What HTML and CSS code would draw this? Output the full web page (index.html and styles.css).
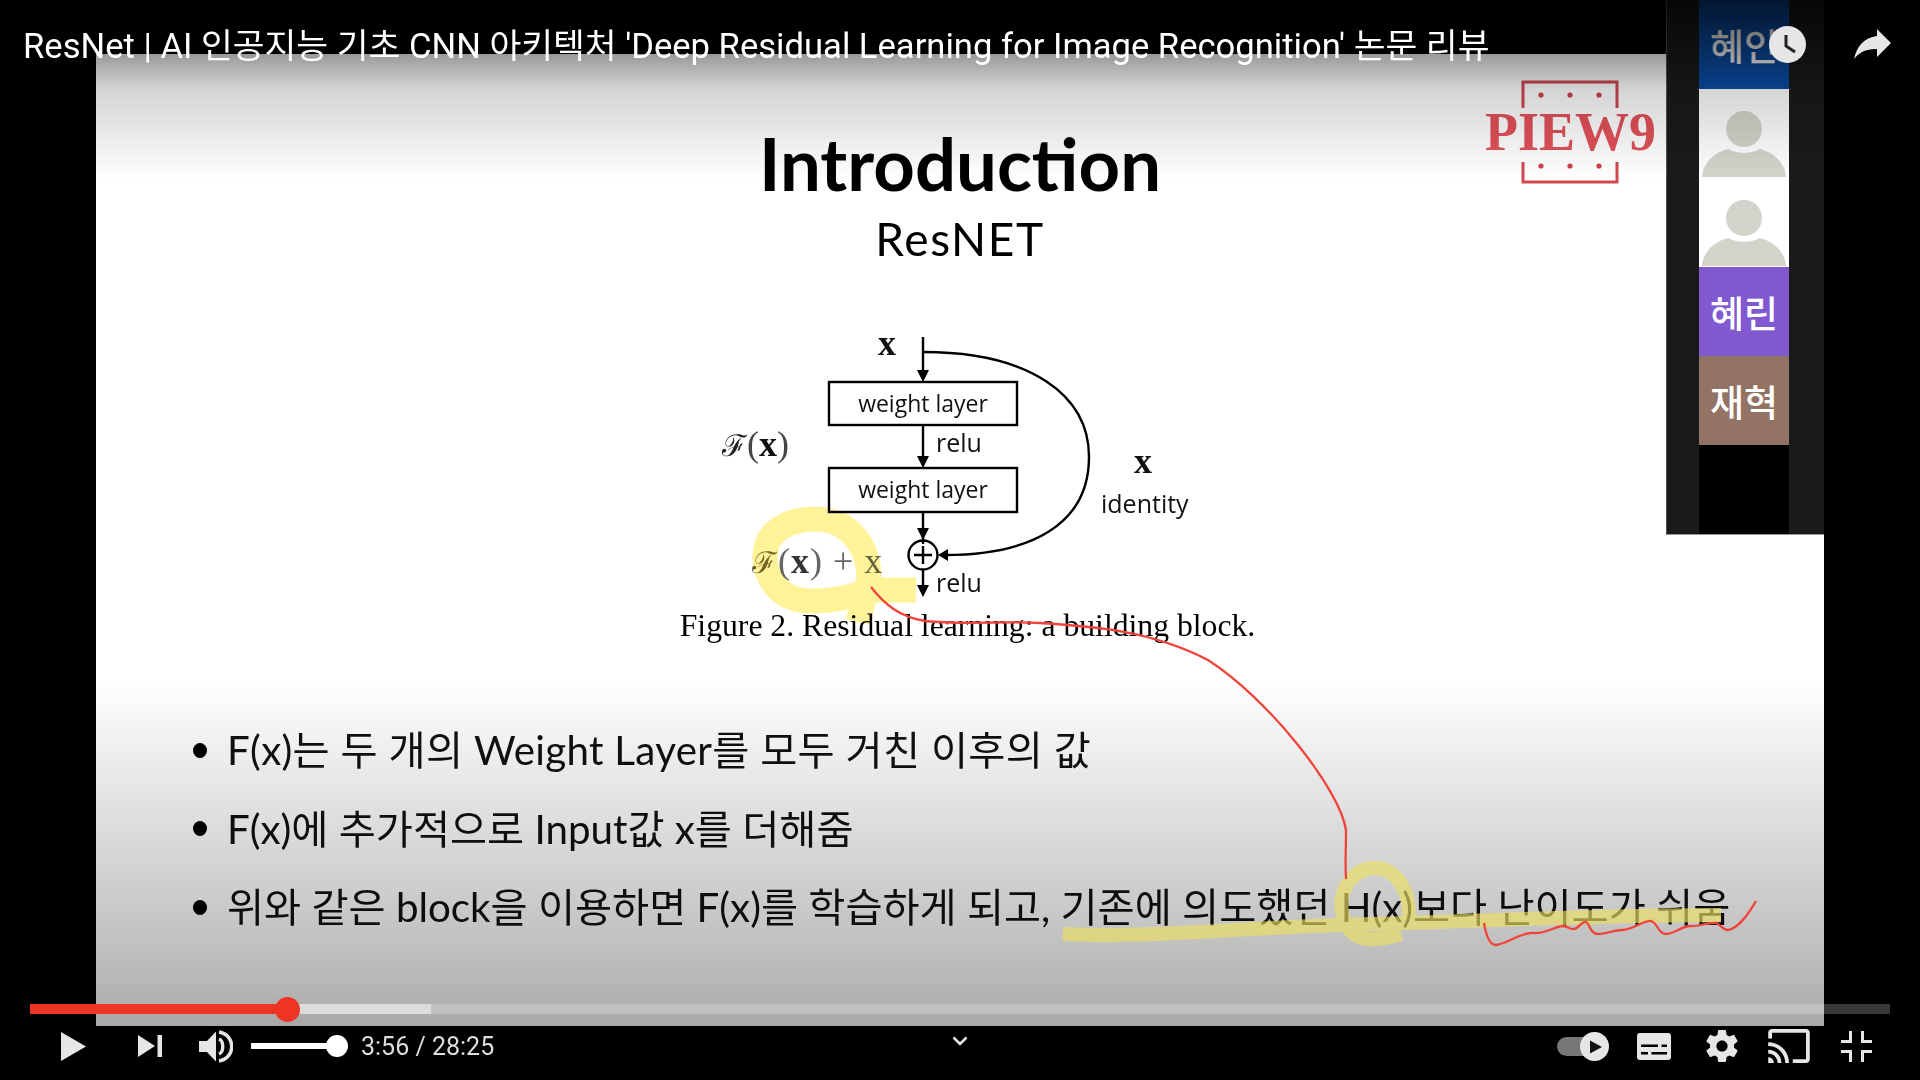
FILE: index.html
```html
<!DOCTYPE html>
<html lang="ko">

<head>
    <meta charset="utf-8">
    <title>ResNet 논문 리뷰</title>
    <link rel="stylesheet" href="styles.css">
</head>

<body>
    <div class="player">
        <div class="slide">
            <div class="heading">
                <h1>Introduction</h1>
                <h2>ResNET</h2>
            </div>

            <svg class="diagram" viewBox="680 315 560 292">
                <g class="wire">
                    <path d="M923 337V372M923 425V458M923 512V544M923 570V587" />
                    <path d="M923 352C1030 352 1089 395 1089 457C1089 525 1030 555 945 555" />
                    <rect x="829" y="382" width="188" height="43" />
                    <rect x="829" y="468" width="188" height="44" />
                    <circle cx="923" cy="555" r="14.5" />
                    <path d="M914 555H932M923 546V564" />
                </g>
                <path class="tip" d="M917 370H929L923 382ZM917 456H929L923 468ZM917 528H929L923 540ZM917 585H929L923 597ZM948 549V561L938 555Z" />
                <text class="math" x="878" y="355">x</text>
                <text class="box-label" x="923" y="412" text-anchor="middle">weight layer</text>
                <text class="box-label" x="923" y="498" text-anchor="middle">weight layer</text>
                <text class="side-label" x="936" y="452">relu</text>
                <text class="side-label" x="936" y="592">relu</text>
                <text class="side-label" x="1101" y="513">identity</text>
                <text class="math" x="1134" y="473">x</text>
                <text class="math" x="722" y="456"><tspan class="script">ℱ</tspan><tspan class="thin">(</tspan>x<tspan class="thin">)</tspan></text>
                <text class="math math-faded" x="752" y="573"><tspan class="script">ℱ</tspan><tspan class="thin">(</tspan>x<tspan class="thin">) + x</tspan></text>
            </svg>
            <p class="caption">Figure 2. Residual learning: a building block.</p>

            <ul class="points">
                <li class="points-wide">F(x)는 두 개의 Weight Layer를 모두 거친 이후의 값</li>
                <li>F(x)에 추가적으로 Input값 x를 더해줌</li>
                <li>위와 같은 block을 이용하면 F(x)를 학습하게 되고, 기존에 의도했던 H(x)보다 난이도가 쉬움</li>
            </ul>

            <svg class="logo" viewBox="0 0 172 106">
                <path class="logo-frame" d="M38 28V2H132V28M38 82V102H132V82" />
                <g class="logo-dots">
                    <circle cx="56" cy="15" r="2.6" /><circle cx="85" cy="15" r="2.6" /><circle cx="114" cy="15" r="2.6" />
                    <circle cx="56" cy="86" r="2.6" /><circle cx="85" cy="86" r="2.6" /><circle cx="114" cy="86" r="2.6" />
                </g>
                <text class="logo-text" x="0" y="70">PIEW9</text>
            </svg>

            <svg class="ink" viewBox="96 54 1728 972">
                <path class="marker" d="M812 601C770 601 764 565 765 555C766 530 790 519 815 519C848 519 869 545 869 578L858 622M869 590H916M812 601C835 601 860 595 869 590" />
            </svg>
        </div>

        <div class="cams">
            <div class="cam-strip">
                <div class="cam cam-blue">혜인</div>
                <div class="cam">
                    <svg class="avatar" viewBox="0 0 90 89"><circle cx="45" cy="40" r="18" /><path d="M3 88C4 72 18 62 30 60C36 65 54 65 60 60C72 62 86 72 87 88Z" /></svg>
                </div>
                <div class="cam">
                    <svg class="avatar" viewBox="0 0 90 89"><circle cx="45" cy="40" r="18" /><path d="M3 88C4 72 18 62 30 60C36 65 54 65 60 60C72 62 86 72 87 88Z" /></svg>
                </div>
                <div class="cam cam-purple">혜린</div>
                <div class="cam cam-brown">재혁</div>
            </div>
        </div>

        <div class="shade"></div>

        <!-- the lower strokes keep their colour under the player shade, so they sit above it -->
        <svg class="ink-top" viewBox="0 0 1920 1080">
            <path class="marker-low" d="M1063 934C1150 938 1240 928 1340 925C1450 922 1600 915 1721 915M1401 934C1375 942 1348 945 1342 912C1338 888 1355 868 1375 868C1396 868 1410 890 1409 918" />
            <path class="pen" d="M871 587C885 605 900 617 925 621C960 625 1000 621 1040 623C1090 626 1150 630 1208 660C1270 700 1340 790 1346 830C1346 850 1345 860 1346 879" />
            <path class="pen" d="M1484 923C1486 935 1490 945 1496 945C1508 944 1520 932 1534 933C1545 934 1553 927 1563 926C1568 926 1570 930 1574 929C1579 928 1582 921 1586 922C1590 924 1590 934 1598 934C1606 934 1614 930 1622 930C1633 930 1644 920 1651 921C1658 923 1658 934 1666 934C1674 934 1682 926 1690 926C1698 927 1708 922 1716 923C1721 925 1723 930 1728 930C1737 929 1748 915 1756 901" />
        </svg>

        <div class="top-bar">
            <span class="video-title">ResNet | AI 인공지능 기초 CNN 아키텍처 'Deep Residual Learning for Image Recognition' 논문 리뷰</span>
            <svg class="clock" viewBox="0 0 37 37">
                <circle cx="18.5" cy="18.5" r="18.5" />
                <path d="M17 9V20L26 26" />
            </svg>
            <svg class="share" viewBox="0 0 38 30">
                <path d="M23 0L37 14L23 28V20C13 19.5 5.5 23 0 30C2.5 18 10 8.5 23 7Z" />
            </svg>
        </div>

        <div class="controls">
            <div class="seek">
                <div class="seek-buffer" style="width: 21.56%"></div>
                <div class="seek-played" style="width: 13.87%"><span class="seek-knob"></span></div>
            </div>

            <div class="row">
                <div class="group">
                    <svg class="icon play" viewBox="0 0 25 29"><path d="M0 0L25 14.5L0 29Z" /></svg>
                    <svg class="icon next" viewBox="0 0 24 22"><path d="M0 0L17 11L0 22ZM19.5 0H24V22H19.5Z" /></svg>
                    <svg class="icon volume" viewBox="0 0 34 33">
                        <path d="M0 11H8L17 1.5V31.5L8 22H0Z" />
                        <path class="wave" d="M20 9C25 11 25 22 20 24M20 2C37 5 37 28 20 31" />
                    </svg>
                    <div class="volume-bar"><span class="volume-knob"></span></div>
                    <span class="time">3:56 / 28:25</span>
                </div>

                <svg class="chevron" viewBox="0 0 16 10"><path d="M1.5 1.5L8 8L14.5 1.5" /></svg>

                <div class="group">
                    <svg class="icon toggle" viewBox="0 0 52 29">
                        <rect class="toggle-track" x="0" y="5" width="38" height="19" rx="9.5" />
                        <circle cx="37.5" cy="14.5" r="14.5" />
                        <path class="toggle-play" d="M33 8.5L45 15L33 21.5Z" />
                    </svg>
                    <svg class="icon subs" viewBox="0 0 34 27">
                        <rect width="34" height="27" rx="3" />
                        <path class="subs-line" d="M4 11.5H21V14H4ZM24.5 11.5H30V14H24.5ZM4 19H11V21.5H4ZM14.5 19H30V21.5H14.5Z" />
                    </svg>
                    <svg class="icon gear" viewBox="2 2 20 20">
                        <path d="M19.43 12.98c.04-.32.07-.64.07-.98s-.03-.66-.07-.98l2.11-1.65c.19-.15.24-.42.12-.64l-2-3.46c-.12-.22-.39-.3-.61-.22l-2.49 1c-.52-.4-1.08-.73-1.69-.98l-.38-2.65C14.46 2.18 14.25 2 14 2h-4c-.25 0-.46.18-.49.42l-.38 2.65c-.61.25-1.17.59-1.69.98l-2.49-1c-.23-.09-.49 0-.61.22l-2 3.46c-.13.22-.07.49.12.64l2.11 1.65c-.04.32-.07.65-.07.98s.03.66.07.98l-2.11 1.65c-.19.15-.24.42-.12.64l2 3.46c.12.22.39.3.61.22l2.49-1c.52.4 1.08.73 1.69.98l.38 2.65c.03.24.24.42.49.42h4c.25 0 .46-.18.49-.42l.38-2.65c.61-.25 1.17-.59 1.69-.98l2.49 1c.23.09.49 0 .61-.22l2-3.46c.12-.22.07-.49-.12-.64l-2.11-1.65zM12 15.5c-1.93 0-3.5-1.57-3.5-3.5s1.57-3.5 3.5-3.5 3.5 1.57 3.5 3.5-1.57 3.5-3.5 3.5z" />
                    </svg>
                    <svg class="icon cast" viewBox="1 3 22 18">
                        <path d="M21 3H3c-1.1 0-2 .9-2 2v3h2V5h18v14h-7v2h7c1.1 0 2-.9 2-2V5c0-1.1-.9-2-2-2zM1 18v3h3c0-1.66-1.34-3-3-3zm0-4v2c2.76 0 5 2.24 5 5h2c0-3.87-3.13-7-7-7zm0-4v2c4.97 0 9 4.03 9 9h2c0-6.08-4.93-11-11-11z" />
                    </svg>
                    <svg class="icon shrink" viewBox="0 0 31 31">
                        <path d="M0 9H8V0H11V12H0ZM20 0H23V9H31V12H20ZM0 19H11V31H8V22H0ZM20 19H31V22H23V31H20Z" />
                    </svg>
                </div>
            </div>
        </div>
    </div>
</body>

</html>
```

FILE: styles.css
```css
* {
    box-sizing: border-box;
}

body {
    margin: 0;
    background: #000;
    font-family: "Noto Sans CJK KR", sans-serif;
}

.player {
    position: relative;
    width: 1920px;
    height: 1080px;
    padding: 54px 96px 0;
    overflow: hidden;
    background: #000;
}

.slide {
    position: relative;
    width: 1728px;
    height: 972px;
    background: #fff;
    color: #000;
}

.heading {
    padding-top: 69px;
    text-align: center;
    font-family: Lato, sans-serif;
}

.heading h1 {
    margin: 0;
    font-size: 72.5px;
    font-weight: 700;
    line-height: 80px;
}

.heading h2 {
    margin: 8px 0 0;
    font-size: 46px;
    font-weight: 400;
    line-height: 56px;
    letter-spacing: 1.6px;
}

.diagram {
    display: block;
    width: 560px;
    height: 292px;
    margin: 48px auto 0;
}

.wire {
    fill: none;
    stroke: #000;
    stroke-width: 2.4;
}

.tip {
    fill: #000;
}

.box-label {
    font-family: "Open Sans", sans-serif;
    font-size: 23px;
    fill: #111;
}

.side-label {
    font-family: "Open Sans", sans-serif;
    font-size: 25px;
    fill: #111;
}

.math {
    font-family: "Liberation Serif", serif;
    font-size: 36px;
    font-weight: 700;
    fill: #111;
}

.math-faded {
    letter-spacing: 1px;
    fill: #333;
}

.script {
    font-family: "DejaVu Serif", serif;
    font-size: 30px;
    font-weight: 400;
    fill: #222;
}

.math-faded .script {
    fill: #6f6a3c;
}

.thin {
    font-weight: 400;
    fill: #444;
}

.math-faded .thin {
    fill: #666;
}

.caption {
    margin: 1px 0 0;
    padding-left: 15px;
    text-align: center;
    font-family: "Liberation Serif", serif;
    font-size: 31.7px;
    line-height: 36px;
}

.points {
    display: flex;
    flex-direction: column;
    margin: 0;
    padding: 67px 0 0 97px;
    list-style: none;
    font-family: Lato, "Noto Sans CJK KR", sans-serif;
    font-size: 40.3px;
    font-weight: 400;
    line-height: 78.5px;
    color: #111;
}

.points li {
    display: flex;
    align-items: center;
    gap: 20px;
    white-space: nowrap;
}

.points .points-wide {
    letter-spacing: 0.3px;
}

.points li::before {
    content: "";
    width: 14px;
    height: 15px;
    border-radius: 50%;
    background: #000;
}

.logo {
    position: absolute;
    top: 26px;
    left: 1389px;
    width: 172px;
    height: 106px;
}

.logo-frame {
    fill: none;
    stroke: #d1484f;
    stroke-width: 3;
}

.logo-dots {
    fill: #c9444b;
}

.logo-text {
    font-family: "Liberation Serif", serif;
    font-size: 54px;
    font-weight: 700;
    fill: #e3525a;
}

.ink {
    position: absolute;
    top: 0;
    left: 0;
    width: 1728px;
    height: 972px;
}

.marker {
    fill: none;
    stroke: #fff39a;
    stroke-width: 25;
    stroke-linejoin: round;
    mix-blend-mode: multiply;
}

.ink-top {
    position: absolute;
    top: 0;
    left: 0;
    width: 1920px;
    height: 1080px;
}

.marker-low {
    fill: none;
    stroke: #ecdf61;
    stroke-opacity: 0.65;
    stroke-width: 14;
    stroke-linejoin: round;
}

.pen {
    fill: none;
    stroke: #f0443a;
    stroke-width: 2.3;
}

/* webcam column on the right of the slide */
.cams {
    position: absolute;
    top: 0;
    left: 1666px;
    display: flex;
    justify-content: center;
    width: 158px;
    height: 535px;
    padding-right: 3px;
    background: #1a1a1a;
    border-left: 1px solid #555;
    border-bottom: 1px solid #999;
}

.cam-strip {
    width: 90px;
    background: #000;
}

.cam {
    display: flex;
    align-items: center;
    justify-content: center;
    height: 89px;
    background: #fff;
    color: #fff;
    font-size: 37px;
    font-weight: 500;
}

.cam-blue {
    background: #0a4da6;
}

.cam-purple {
    background: #8059d1;
}

.cam-brown {
    background: #937464;
}

.avatar {
    width: 90px;
    height: 89px;
    fill: #d4d4cc;
}

.shade {
    position: absolute;
    top: 0;
    left: 0;
    width: 1920px;
    height: 1080px;
    background:
        linear-gradient(rgba(0, 0, 0, 0.72) 0, rgba(0, 0, 0, 0.4) 54px, rgba(0, 0, 0, 0.17) 89px, transparent 180px),
        linear-gradient(transparent 680px, rgba(0, 0, 0, 0.15) 840px, rgba(0, 0, 0, 0.28) 980px, rgba(0, 0, 0, 0.34) 1026px);
}

.top-bar {
    position: absolute;
    top: 0;
    left: 0;
    display: flex;
    align-items: center;
    width: 1920px;
    height: 88px;
    padding: 0 28px 0 23px;
}

.video-title {
    flex: 1;
    margin-top: -3px;
    font-family: Roboto, "Noto Sans CJK KR", sans-serif;
    font-size: 34.6px;
    color: #fff;
    white-space: nowrap;
}

.clock {
    width: 37px;
    height: 37px;
    margin-right: 48px;
    fill: #e6e6e6;
}

.clock path {
    fill: none;
    stroke: #222;
    stroke-width: 3;
}

.share {
    width: 38px;
    height: 30px;
    fill: #e6e6e6;
}

.controls {
    position: absolute;
    left: 0;
    bottom: 0;
    width: 1920px;
    height: 54px;
}

.seek {
    position: absolute;
    top: -22px;
    left: 30px;
    width: 1860px;
    height: 10px;
    background: rgba(255, 255, 255, 0.22);
}

.seek-buffer {
    position: absolute;
    top: 0;
    left: 0;
    height: 10px;
    background: #dcdcdc;
}

.seek-played {
    position: absolute;
    top: 0;
    left: 0;
    height: 10px;
    background: #ee3424;
}

.seek-knob {
    position: absolute;
    top: -7.5px;
    right: -12.5px;
    width: 25px;
    height: 25px;
    border-radius: 50%;
    background: #ee3424;
}

.row {
    position: relative;
    display: flex;
    align-items: center;
    justify-content: space-between;
    height: 40px;
    padding: 0 48px 0 61px;
}

.group {
    display: flex;
    align-items: center;
}

.icon {
    flex: none;
    fill: #e6e6e6;
}

.play {
    width: 25px;
    height: 29px;
}

.next {
    width: 24px;
    height: 22px;
    margin-left: 52px;
}

.volume {
    width: 34px;
    height: 33px;
    margin-left: 37px;
}

.wave {
    fill: none;
    stroke: #e6e6e6;
    stroke-width: 3.4;
}

.volume-bar {
    position: relative;
    width: 86px;
    height: 6px;
    margin: 0 24px 0 18px;
    background: #fff;
}

.volume-knob {
    position: absolute;
    top: -8px;
    right: -11px;
    width: 22px;
    height: 22px;
    border-radius: 50%;
    background: #fff;
}

.time {
    font-family: Roboto, sans-serif;
    font-size: 25px;
    color: #ddd;
}

.chevron {
    position: absolute;
    top: 10px;
    left: 952px;
    width: 16px;
    height: 10px;
    fill: none;
    stroke: #e6e6e6;
    stroke-width: 2.6;
}

.toggle {
    width: 52px;
    height: 29px;
}

.toggle-track {
    fill: #777;
}

.toggle-play {
    fill: #111;
}

.subs {
    width: 34px;
    height: 27px;
    margin-left: 28px;
}

.subs-line {
    fill: #000;
}

.gear {
    width: 32px;
    height: 32px;
    margin-left: 35px;
}

.cast {
    width: 42px;
    height: 34px;
    margin-left: 30px;
}

.shrink {
    width: 31px;
    height: 31px;
    margin-left: 31px;
}
```
